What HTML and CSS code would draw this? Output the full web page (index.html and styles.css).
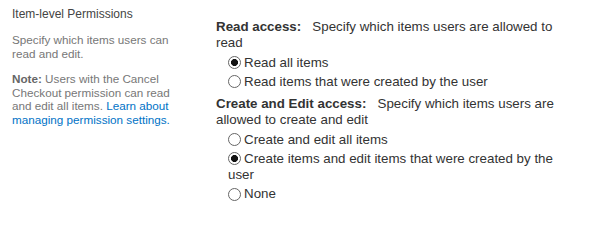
FILE: index.html
```html
<!DOCTYPE html>
<html lang="en">
<head>
<meta charset="utf-8">
<title>Item-level Permissions</title>
<link rel="stylesheet" href="styles.css">
</head>
<body>
<div class="section">
  <div class="info">
    <h3 class="info-title">Item-level Permissions</h3>
    <p class="info-desc">Specify which items users can read and edit.</p>
    <p class="info-desc note"><b>Note:</b> Users with the Cancel Checkout permission can read and edit all items. <a href="#" class="link">Learn about managing permission settings.</a></p>
  </div>
  <div class="fields">
    <div class="group">
      <div class="group-title"><b>Read access:</b>&nbsp;&nbsp; Specify which items users are allowed to read</div>
      <label class="option"><input type="radio" name="read" checked>Read all items</label>
      <label class="option"><input type="radio" name="read">Read items that were created by the user</label>
    </div>
    <div class="group second">
      <div class="group-title"><b>Create and Edit access:</b>&nbsp;&nbsp; Specify which items users are allowed to create and edit</div>
      <label class="option"><input type="radio" name="edit">Create and edit all items</label>
      <label class="option"><input type="radio" name="edit" checked>Create items and edit items that were created by the user</label>
      <label class="option"><input type="radio" name="edit">None</label>
    </div>
  </div>
</div>
</body>
</html>
```

FILE: styles.css
```css
html, body {
  margin: 0;
  padding: 0;
  background: #ffffff;
}

body {
  font-family: "Liberation Sans", Arial, sans-serif;
  color: #333333;
}

.section {
  display: flex;
  align-items: flex-start;
}

.info {
  width: 160px;
  margin-left: 12px;
  padding-top: 7px;
}

.info-title {
  margin: 0;
  font-size: 12px;
  line-height: 15px;
  font-weight: normal;
  color: #444444;
}

.info-desc {
  margin: 11px 0 0;
  font-size: 11.7px;
  line-height: 13.5px;
  color: #777777;
}

.info-desc.note {
  margin-top: 12px;
}

.info-desc b {
  color: #666666;
}

.link {
  color: #0072c6;
  text-decoration: none;
}

.fields {
  margin-left: 44px;
  width: 350px;
  padding-top: 19px;
  font-size: 13.33px;
  color: #333333;
}

.group-title {
  line-height: 16px;
  margin-bottom: 1px;
}

.group-title b {
  color: #333333;
}

.group.second {
  margin-top: 6px;
}

.option {
  display: block;
  margin-left: 12px;
  line-height: 16.5px;
  padding-top: 2.5px;
}

.option input {
  -webkit-appearance: none;
  appearance: none;
  box-sizing: border-box;
  width: 13px;
  height: 13px;
  margin: 0 3px 0 0;
  border: 1px solid #666666;
  border-radius: 50%;
  background: #ffffff;
  vertical-align: -2.5px;
}

.option input:checked {
  background: radial-gradient(circle, #111111 0, #111111 3.2px, #ffffff 3.8px);
}
```
